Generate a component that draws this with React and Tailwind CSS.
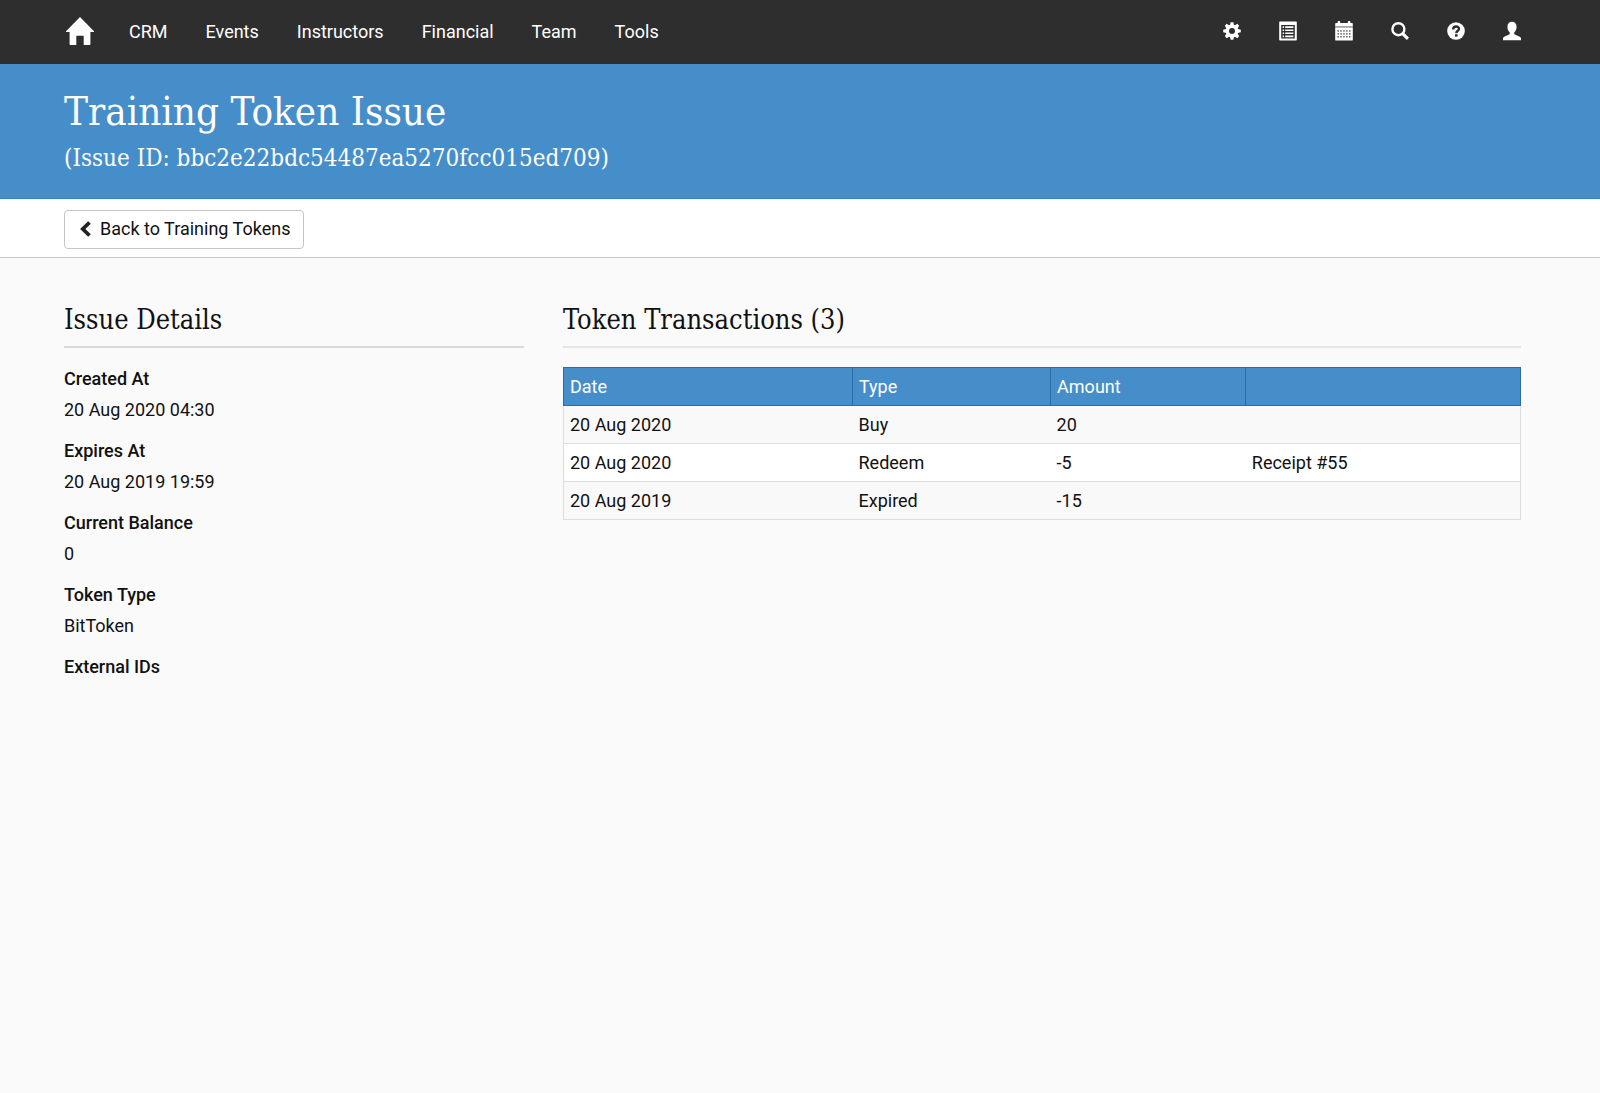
import React from "react";

const slab = "font-['Roboto_Slab','DejaVu_Serif_Condensed','DejaVu_Serif',serif]";

const navLinks = ["CRM", "Events", "Instructors", "Financial", "Team", "Tools"];

const details = [
  ["Created At", "20 Aug 2020 04:30"],
  ["Expires At", "20 Aug 2019 19:59"],
  ["Current Balance", "0"],
  ["Token Type", "BitToken"],
  ["External IDs", ""],
];

const transactions = [
  ["20 Aug 2020", "Buy", "20", ""],
  ["20 Aug 2020", "Redeem", "-5", "Receipt #55"],
  ["20 Aug 2019", "Expired", "-15", ""],
];

function HomeIcon() {
  return (
    <svg viewBox="0 0 28 28" className="size-7" fill="currentColor" aria-hidden="true">
      <path d="M14 0 28 14.2c.3.5.1.8-.4.8H24.4v12.2c0 .5-.3.8-.8.8h-5.9v-9.2h-7.4V28H4.4c-.5 0-.8-.3-.8-.8V15H.4c-.5 0-.7-.3-.4-.8Z" />
    </svg>
  );
}

function GearIcon() {
  return (
    <svg viewBox="0 0 18 20" className="h-5 w-[18px]" aria-hidden="true">
      <g fill="currentColor">
        {[0, 45, 90, 135].map((a) => (
          <path key={a} d="M7.7 1.2h2.6l.8 3v11.6l-.8 3H7.7l-.8-3V4.2Z" transform={`rotate(${a} 9 10)`} />
        ))}
        <circle cx="9" cy="10" r="6.4" />
      </g>
      <circle cx="9" cy="10" r="3" fill="#2e2e2e" />
    </svg>
  );
}

function ListIcon() {
  return (
    <svg viewBox="0 0 18 20" className="h-5 w-[18px]" fill="currentColor" aria-hidden="true">
      <path fillRule="evenodd" d="M1 .5h16a.8.8 0 0 1 .8.8v17.4a.8.8 0 0 1-.8.8H1a.8.8 0 0 1-.8-.8V1.3A.8.8 0 0 1 1 .5ZM2.2 4v13.4h13.6V4Z" />
      <path d="M3.6 5.3h1.5v1.6H3.6ZM6.2 5.3h8.2v1.6H6.2ZM3.6 8.4h1.5V10H3.6ZM6.2 8.4h8.2V10H6.2ZM3.6 11.5h1.5v1.6H3.6ZM6.2 11.5h8.2v1.6H6.2ZM3.6 14.6h1.5v1.6H3.6ZM6.2 14.6h8.2v1.6H6.2Z" />
    </svg>
  );
}

function CalendarIcon() {
  return (
    <svg viewBox="0 0 18 20" className="h-5 w-[18px]" aria-hidden="true">
      <g fill="currentColor">
        <path d="M1 2h1.6V1.2a1.3 1.3 0 0 1 2.6 0V2h7.6v-.8a1.3 1.3 0 0 1 2.6 0V2H17a.8.8 0 0 1 .8.8v2.4H.2V2.8A.8.8 0 0 1 1 2Z" />
        <path d="M.2 6.6h17.6v12.3a.7.7 0 0 1-.7.7H.9a.7.7 0 0 1-.7-.7Z" />
        <path d="M.2 5.2h17.6v1.4H.2Z" opacity=".55" />
      </g>
      <g fill="#2e2e2e">
        {[9.3, 12.2, 15.1].map((y) =>
          [2.5, 5.4, 8.3, 11.2, 14.1].map((x) => (
            <rect key={`${x}-${y}`} x={x} y={y} width="1.3" height="1.3" />
          ))
        )}
      </g>
    </svg>
  );
}

function SearchIcon() {
  return (
    <svg viewBox="0 0 18 20" className="h-5 w-[18px]" fill="none" stroke="currentColor" aria-hidden="true">
      <circle cx="7.4" cy="8.2" r="6" strokeWidth="2.4" />
      <path d="m12 12.8 4.9 5" strokeWidth="3.2" />
    </svg>
  );
}

function HelpIcon() {
  return (
    <svg viewBox="0 0 18 20" className="h-5 w-[18px]" aria-hidden="true">
      <circle cx="9" cy="10" r="8.8" fill="currentColor" />
      <path d="M6.2 8.4c0-2 1.1-2.9 2.9-2.9s2.9.8 2.9 2.3c0 2.1-2.6 1.9-2.7 4.3" fill="none" stroke="#2e2e2e" strokeWidth="2.4" />
      <path d="M8 13.2h2.6v2.4H8Z" fill="#2e2e2e" />
    </svg>
  );
}

function UserIcon() {
  return (
    <svg viewBox="0 0 18 20" className="h-5 w-[18px]" fill="currentColor" aria-hidden="true">
      <path d="M9 .7c2.9 0 4.6 2 4.6 5 0 2.3-.9 4.4-2.2 5.6-.4.9-.2 1.900.5 2.300l4.900 2.200c.9.5 1.200 1 1.200 2v1.500H0v-1.500c0-1 .3-1.500 1.200-2l4.900-2.200c.7-.4.9-1.400.5-2.300C5.300 10.100 4.400 8 4.400 5.700c0-3 1.700-5 4.600-5Z" />
    </svg>
  );
}

function BackIcon() {
  return (
    <svg viewBox="0 0 11 16" className="h-4 w-[11px]" fill="none" stroke="#222" strokeWidth="3.8" aria-hidden="true">
      <path d="M9.5 1.5 2.8 8l6.7 6.5" />
    </svg>
  );
}

const tools = [
  ["Settings", GearIcon],
  ["Lists", ListIcon],
  ["Calendar", CalendarIcon],
  ["Search", SearchIcon],
  ["Help", HelpIcon],
  ["Account", UserIcon],
];

export default function App() {
  return (
    <div className="min-h-screen bg-[#fafafa] font-['Roboto',sans-serif] text-lg text-[#111]">
      <nav className="flex h-16 items-center bg-[#2e2e2e] pr-[79px] pl-[66px] text-white">
        <a href="#home" aria-label="Home" className="pb-0.5">
          <HomeIcon />
        </a>
        <ul className="ml-[35px] flex gap-[38px]">
          {navLinks.map((label) => (
            <li key={label}>
              <a href={`#${label.toLowerCase()}`}>{label}</a>
            </li>
          ))}
        </ul>
        <div className="ml-auto flex gap-[38px] pb-0.5">
          {tools.map(([label, Icon]) => (
            <button key={label} type="button" aria-label={label}>
              <Icon />
            </button>
          ))}
        </div>
      </nav>

      <header className={`border-b border-[#2f84c6] bg-[#468ec9] pt-6 pr-20 pb-5 pl-16 text-white ${slab}`}>
        <h1 className="text-[40px] leading-[46px] font-light">Training Token Issue</h1>
        <p className="pt-1 text-2xl leading-10 font-medium">(Issue ID: bbc2e22bdc54487ea5270fcc015ed709)</p>
      </header>

      <div className="border-b border-[#c8c8c8] bg-white pt-[11px] pr-20 pb-2 pl-16">
        <button
          type="button"
          className="flex h-[39px] items-center gap-[9px] rounded border border-[#c4c4c4] bg-white pr-[13px] pb-0.5 pl-[15px]"
        >
          <BackIcon />
          Back to Training Tokens
        </button>
      </div>

      <main className="grid grid-cols-[460fr_958fr] items-start gap-[39px] pt-11 pr-[79px] pl-16">
        <section>
          <h2 className={`border-b-2 border-[#d9d9d9] pb-2 text-[27px] leading-9 font-light ${slab}`}>Issue Details</h2>
          <dl className="mt-[15px] flex flex-col gap-2.5 leading-[31px]">
            {details.map(([label, value]) => (
              <div key={label}>
                <dt className="font-medium">{label}</dt>
                <dd>{value}</dd>
              </div>
            ))}
          </dl>
        </section>

        <section>
          <h2 className={`border-b-2 border-[#e1e6ea] pb-2 text-[27px] leading-9 font-light ${slab}`}>
            Token Transactions (3)
          </h2>
          <table className="mt-[19px] w-full table-fixed border-collapse border border-[#dddddd] text-left">
            <colgroup>
              <col className="w-[30.2%]" />
              <col className="w-[20.7%]" />
              <col className="w-[20.4%]" />
              <col />
            </colgroup>
            <thead>
              <tr className="h-[38px] bg-[#468ec9] text-white">
                {["Date", "Type", "Amount", ""].map((label, i) => (
                  <th key={i} scope="col" className="border border-[#2b6da3] px-1.5 font-normal">
                    {label}
                  </th>
                ))}
              </tr>
            </thead>
            <tbody>
              {transactions.map((row, i) => (
                <tr key={i} className="h-[38px] border-b border-[#dddddd] odd:bg-[#f9f9f9] even:bg-white">
                  {row.map((cell, j) => (
                    <td key={j} className="px-1.5">
                      {cell}
                    </td>
                  ))}
                </tr>
              ))}
            </tbody>
          </table>
        </section>
      </main>
    </div>
  );
}
